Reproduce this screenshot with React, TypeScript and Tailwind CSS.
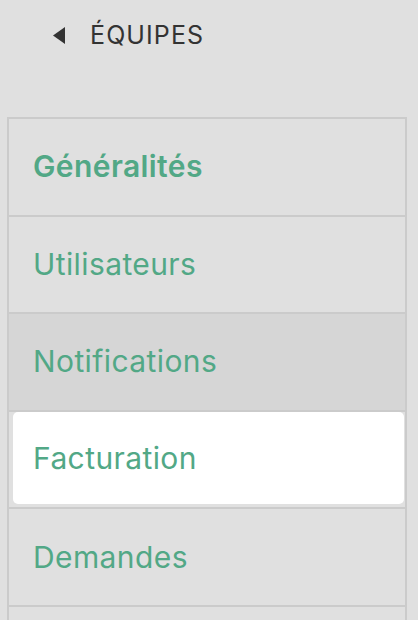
const items = [
  { id: "generalites", label: "Généralités", bold: true },
  { id: "utilisateurs", label: "Utilisateurs" },
  { id: "notifications", label: "Notifications", hover: true },
  { id: "facturation", label: "Facturation", active: true },
  { id: "demandes", label: "Demandes" },
  { id: "autres", label: "" },
];

function App() {
  return (
    <div className="h-[620px] overflow-hidden bg-[#e0e0e0] font-['Inter',sans-serif]">
      <header className="flex h-[117px] items-start pt-[19px]">
        <button className="flex items-center pl-[53px] text-[#333333]">
          <svg width="12" height="17" viewBox="0 0 12 17" className="mt-[1px]">
            <path d="M12 0 L0 8.5 L12 17 Z" fill="#333333" />
          </svg>
          <span className="ml-[25px] text-[25px] leading-[32px] tracking-[1.1px]">
            ÉQUIPES
          </span>
        </button>
      </header>
      <ul className="ml-[7px] mr-[11px] border-2 border-b-0 border-[#cbcbcb]">
        {items.map((item) => (
          <li
            key={item.id}
            className={
              "flex h-[97.6px] border-b-2 border-[#cbcbcb] " +
              (item.hover ? "bg-[#d6d6d6]" : "")
            }
          >
            {item.active ? (
              <div className="mb-[3px] ml-[4px] mr-[1px] flex flex-1 items-center rounded-[5px] bg-white pl-[20px]">
                <span className="text-[30px] tracking-[0.4px] text-[#52a886]">
                  {item.label}
                </span>
              </div>
            ) : (
              <a
                href="#"
                className={
                  "flex flex-1 items-center pl-[24px] text-[30px] tracking-[0.4px] text-[#52a886] " +
                  (item.bold ? "font-semibold" : "")
                }
              >
                {item.label}
              </a>
            )}
          </li>
        ))}
      </ul>
    </div>
  );
}

export default App;
